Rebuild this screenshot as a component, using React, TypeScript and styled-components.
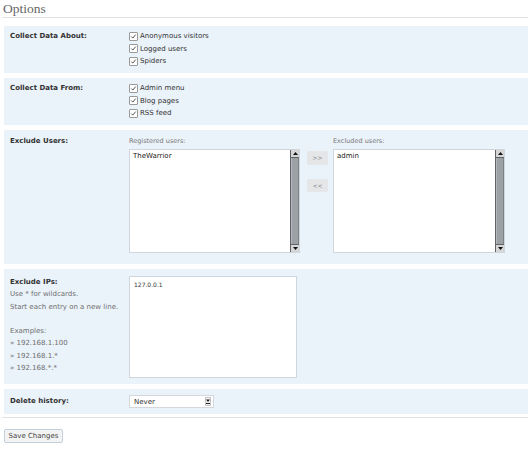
import React from 'react';
import styled, { createGlobalStyle } from 'styled-components';

const GlobalStyle = createGlobalStyle`
  body {
    margin: 0;
    background: #fff;
    font-family: "DejaVu Sans", Verdana, sans-serif;
    color: #333;
  }
`;

const Page = styled.div`
  width: 532px;
  height: 454px;
  box-sizing: border-box;
  padding: 0 4px 0 2px;
  overflow: hidden;
`;

const Heading = styled.h2`
  margin: 0;
  padding: 1px 0 1px 1px;
  font-family: "Liberation Serif", Georgia, serif;
  font-weight: normal;
  font-size: 13.5px;
  line-height: 15px;
  color: #666;
  border-bottom: 1px solid #e3e3e3;
`;

const FormTable = styled.div`
  display: flex;
  flex-direction: column;
  gap: 5px;
  margin: 8px 0 0 2px;
`;

const Row = styled.div<{ $pad: string }>`
  display: grid;
  grid-template-columns: 125px 1fr;
  background: #eaf2fa;
  padding: ${p => p.$pad};
`;

const Label = styled.div<{ $lh?: number }>`
  padding-left: 6px;
  font-size: 7px;
  font-weight: bold;
  line-height: ${p => p.$lh ?? 12.5}px;
  color: #333;
`;

const Options = styled.div`
  display: flex;
  flex-direction: column;
`;

const Option = styled.label`
  display: flex;
  align-items: center;
  gap: 2px;
  height: 12.5px;
  font-size: 7px;
  color: #333;
`;

const Box = styled.span`
  width: 7px;
  height: 7px;
  border: 1px solid #9a9a9a;
  border-radius: 1px;
  background: #fff;
  display: inline-flex;
  align-items: center;
  justify-content: center;
`;

const Hint = styled.div`
  font-size: 7px;
  line-height: 12.3px;
  color: #6f6f6f;
  min-height: 12.3px;
`;

const HintLabel = styled(Label)`
  padding: 0;
  line-height: 12.3px;
`;

const IpLabel = styled.div`
  padding-left: 6px;
`;

const UsersPicker = styled.div`
  display: flex;
  align-items: flex-start;
`;

const UserColumn = styled.div<{ $width: number }>`
  width: ${p => p.$width}px;
  display: flex;
  flex-direction: column;
`;

const Caption = styled.div`
  font-size: 6.5px;
  line-height: 12px;
  color: #777;
  margin-bottom: 2px;
`;

const ListBox = styled.div`
  height: 104px;
  box-sizing: border-box;
  border: 1px solid #cfd6dd;
  background: #fff;
  display: flex;
`;

const ListItems = styled.div`
  flex: 1;
  padding: 1px 3px;
  font-size: 7px;
  line-height: 11px;
  color: #222;
`;

const Scrollbar = styled.div`
  width: 8px;
  display: flex;
  flex-direction: column;
  border-left: 1px solid #5f6368;
  background: #5f6368;
`;

const ScrollArrow = styled.div`
  height: 7px;
  background: #d6d6d6;
  display: flex;
  align-items: center;
  justify-content: center;
  border-bottom: 1px solid #5f6368;
  &:last-child {
    border-bottom: none;
    border-top: 1px solid #5f6368;
  }
`;

const ScrollTrack = styled.div`
  flex: 1;
  background: #9ca1a6;
  border-left: 1px solid #b4b8bc;
  border-right: 1px solid #7d8287;
`;

const MoveButtons = styled.div`
  width: 21px;
  margin: 16px 5px 0 7px;
  display: flex;
  flex-direction: column;
  gap: 14px;
`;

const MoveButton = styled.button`
  height: 13.5px;
  padding: 0;
  border: none;
  border-radius: 2px;
  background: #e4e6e8;
  font-family: "DejaVu Sans", Verdana, sans-serif;
  font-size: 6px;
  color: #777;
`;

const IpArea = styled.textarea`
  width: 168px;
  height: 102px;
  box-sizing: border-box;
  margin: 0;
  padding: 3px 4px;
  border: 1px solid #cfd6dd;
  resize: none;
  overflow: hidden;
  font-family: "DejaVu Sans", Verdana, sans-serif;
  font-size: 6px;
  line-height: 9px;
  color: #333;
  display: block;
`;

const Select = styled.div`
  width: 85px;
  height: 13px;
  box-sizing: border-box;
  border: 1px solid #d4d8dc;
  background: #fff;
  display: flex;
  align-items: center;
  justify-content: space-between;
  padding: 0 2px 0 4px;
  font-size: 7px;
  color: #333;
`;

const SelectArrow = styled.span`
  width: 6px;
  height: 9px;
  box-sizing: border-box;
  border: 1px solid #c4c4c4;
  background: #f2f2f2;
  display: flex;
  align-items: center;
  justify-content: center;
`;

const Divider = styled.div`
  height: 1px;
  background: #e2e2e2;
  margin-top: 3px;
`;

const SaveButton = styled.button`
  margin: 11px 0 0 2px;
  width: 59px;
  height: 14px;
  padding: 0;
  border: 1px solid #c3d0dd;
  border-radius: 2px;
  background: #f3f3f3;
  font-family: "DejaVu Sans", Verdana, sans-serif;
  font-size: 7px;
  color: #464646;
`;

const Tick = () => (
  <svg width="7" height="7" viewBox="0 0 7 7">
    <path d="M1.3 3.6 L2.8 5.1 L5.7 1.6" fill="none" stroke="#444" strokeWidth="0.9" />
  </svg>
);

const Check: React.FC<{ label: string }> = ({ label }) => (
  <Option>
    <Box>
      <Tick />
    </Box>
    {label}
  </Option>
);

const Triangle: React.FC<{ up?: boolean }> = ({ up }) => (
  <svg width="5" height="3" viewBox="0 0 5 3">
    <path d={up ? 'M0 3 L2.5 0 L5 3 Z' : 'M0 0 L5 0 L2.5 3 Z'} fill="#111" />
  </svg>
);

const UserList: React.FC<{ caption: string; users: string[]; width: number }> = ({
  caption,
  users,
  width,
}) => (
  <UserColumn $width={width}>
    <Caption>{caption}</Caption>
    <ListBox>
      <ListItems>
        {users.map(u => (
          <div key={u}>{u}</div>
        ))}
      </ListItems>
      <Scrollbar>
        <ScrollArrow>
          <Triangle up />
        </ScrollArrow>
        <ScrollTrack />
        <ScrollArrow>
          <Triangle />
        </ScrollArrow>
      </Scrollbar>
    </ListBox>
  </UserColumn>
);

const ipHints = [
  'Use * for wildcards.',
  'Start each entry on a new line.',
  '',
  'Examples:',
  '» 192.168.1.100',
  '» 192.168.1.*',
  '» 192.168.*.*',
];

export default function App() {
  return (
    <Page>
      <GlobalStyle />
      <Heading>Options</Heading>
      <FormTable>
        <Row $pad="4px 0 5.5px">
          <Label>Collect Data About:</Label>
          <Options>
            <Check label="Anonymous visitors" />
            <Check label="Logged users" />
            <Check label="Spiders" />
          </Options>
        </Row>
        <Row $pad="4px 0 5.5px">
          <Label>Collect Data From:</Label>
          <Options>
            <Check label="Admin menu" />
            <Check label="Blog pages" />
            <Check label="RSS feed" />
          </Options>
        </Row>
        <Row $pad="5px 0 11px">
          <Label $lh={12}>Exclude Users:</Label>
          <UsersPicker>
            <UserList caption="Registered users:" users={['TheWarrior']} width={171} />
            <MoveButtons>
              <MoveButton>&gt;&gt;</MoveButton>
              <MoveButton>&lt;&lt;</MoveButton>
            </MoveButtons>
            <UserList caption="Excluded users:" users={['admin']} width={172} />
          </UsersPicker>
        </Row>
        <Row $pad="7px 0 6px">
          <IpLabel>
            <HintLabel>Exclude IPs:</HintLabel>
            {ipHints.map((h, i) => (
              <Hint key={i}>{h}</Hint>
            ))}
          </IpLabel>
          <div>
            <IpArea defaultValue="127.0.0.1" />
          </div>
        </Row>
        <Row $pad="6px 0">
          <Label $lh={13}>Delete history:</Label>
          <div>
            <Select>
              Never
              <SelectArrow>
                <svg width="4" height="5" viewBox="0 0 4 5">
                  <path d="M0 0.5 L4 0.5 L2 3 Z" fill="#222" />
                  <rect x="0" y="4" width="4" height="1" fill="#222" />
                </svg>
              </SelectArrow>
            </Select>
          </div>
        </Row>
      </FormTable>
      <Divider />
      <SaveButton>Save Changes</SaveButton>
    </Page>
  );
}
